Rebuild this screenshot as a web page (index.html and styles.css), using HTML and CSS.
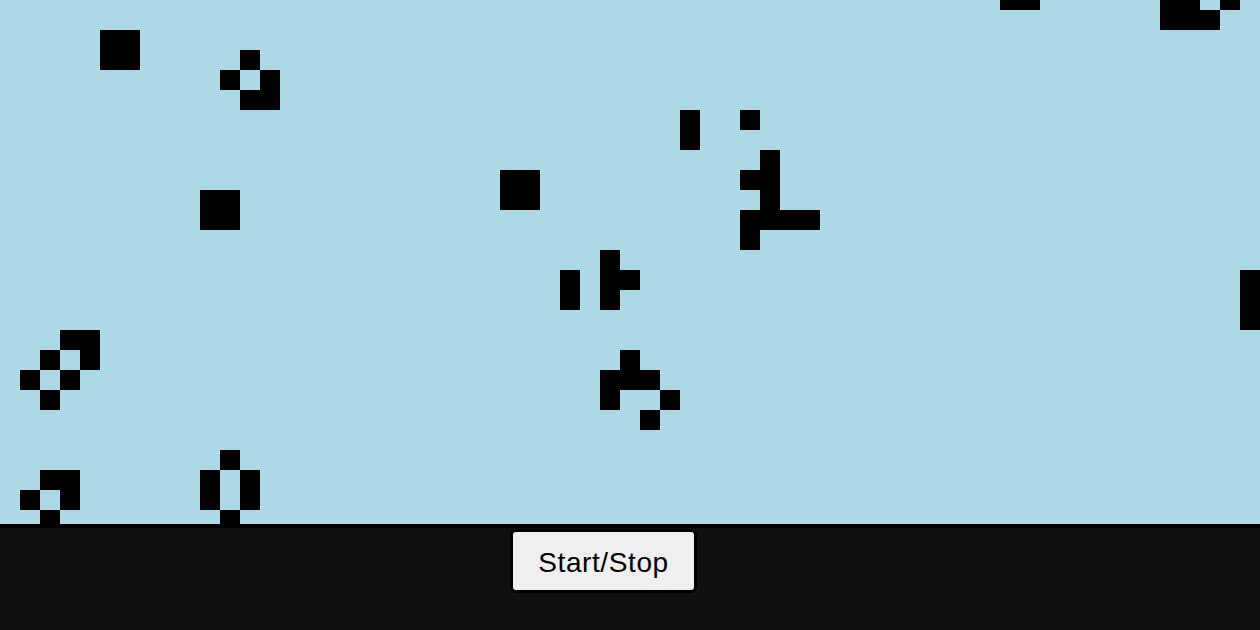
FILE: index.html
```html
<!DOCTYPE html>
<html>
<head>
<meta charset="utf-8">
<title>Game of Life</title>
<link rel="stylesheet" href="styles.css">
</head>
<body>
<div class="board">
  <div class="grid">
    <div class="cell" style="grid-area: 3 / 6"></div>
    <div class="cell" style="grid-area: 3 / 7"></div>
    <div class="cell" style="grid-area: 4 / 6"></div>
    <div class="cell" style="grid-area: 4 / 7"></div>

    <div class="cell" style="grid-area: 4 / 13"></div>
    <div class="cell" style="grid-area: 5 / 12"></div>
    <div class="cell" style="grid-area: 5 / 14"></div>
    <div class="cell" style="grid-area: 6 / 13"></div>
    <div class="cell" style="grid-area: 6 / 14"></div>

    <div class="cell" style="grid-area: 11 / 11"></div>
    <div class="cell" style="grid-area: 11 / 12"></div>
    <div class="cell" style="grid-area: 12 / 11"></div>
    <div class="cell" style="grid-area: 12 / 12"></div>

    <div class="cell" style="grid-area: 7 / 35"></div>
    <div class="cell" style="grid-area: 8 / 35"></div>
    <div class="cell" style="grid-area: 7 / 38"></div>
    <div class="cell" style="grid-area: 9 / 39"></div>
    <div class="cell" style="grid-area: 10 / 39"></div>
    <div class="cell" style="grid-area: 11 / 39"></div>
    <div class="cell" style="grid-area: 10 / 38"></div>
    <div class="cell" style="grid-area: 12 / 38"></div>
    <div class="cell" style="grid-area: 12 / 39"></div>
    <div class="cell" style="grid-area: 12 / 40"></div>
    <div class="cell" style="grid-area: 12 / 41"></div>
    <div class="cell" style="grid-area: 13 / 38"></div>

    <div class="cell" style="grid-area: 10 / 26"></div>
    <div class="cell" style="grid-area: 10 / 27"></div>
    <div class="cell" style="grid-area: 11 / 26"></div>
    <div class="cell" style="grid-area: 11 / 27"></div>

    <div class="cell" style="grid-area: 15 / 29"></div>
    <div class="cell" style="grid-area: 16 / 29"></div>
    <div class="cell" style="grid-area: 14 / 31"></div>
    <div class="cell" style="grid-area: 15 / 31"></div>
    <div class="cell" style="grid-area: 16 / 31"></div>
    <div class="cell" style="grid-area: 15 / 32"></div>

    <div class="cell" style="grid-area: 19 / 32"></div>
    <div class="cell" style="grid-area: 20 / 31"></div>
    <div class="cell" style="grid-area: 20 / 32"></div>
    <div class="cell" style="grid-area: 20 / 33"></div>
    <div class="cell" style="grid-area: 21 / 31"></div>
    <div class="cell" style="grid-area: 21 / 34"></div>
    <div class="cell" style="grid-area: 22 / 33"></div>

    <div class="cell" style="grid-area: 18 / 4"></div>
    <div class="cell" style="grid-area: 18 / 5"></div>
    <div class="cell" style="grid-area: 19 / 3"></div>
    <div class="cell" style="grid-area: 19 / 5"></div>
    <div class="cell" style="grid-area: 20 / 2"></div>
    <div class="cell" style="grid-area: 20 / 4"></div>
    <div class="cell" style="grid-area: 21 / 3"></div>

    <div class="cell" style="grid-area: 25 / 3"></div>
    <div class="cell" style="grid-area: 25 / 4"></div>
    <div class="cell" style="grid-area: 26 / 2"></div>
    <div class="cell" style="grid-area: 26 / 4"></div>
    <div class="cell" style="grid-area: 27 / 3"></div>

    <div class="cell" style="grid-area: 24 / 12"></div>
    <div class="cell" style="grid-area: 25 / 11"></div>
    <div class="cell" style="grid-area: 26 / 11"></div>
    <div class="cell" style="grid-area: 25 / 13"></div>
    <div class="cell" style="grid-area: 26 / 13"></div>
    <div class="cell" style="grid-area: 27 / 12"></div>

    <div class="cell" style="grid-area: 1 / 51"></div>
    <div class="cell" style="grid-area: 1 / 52"></div>
    <div class="cell" style="grid-area: 1 / 59"></div>
    <div class="cell" style="grid-area: 1 / 60"></div>
    <div class="cell" style="grid-area: 2 / 59"></div>
    <div class="cell" style="grid-area: 2 / 60"></div>
    <div class="cell" style="grid-area: 2 / 61"></div>
    <div class="cell" style="grid-area: 1 / 62"></div>

    <div class="cell" style="grid-area: 15 / 63"></div>
    <div class="cell" style="grid-area: 16 / 63"></div>
    <div class="cell" style="grid-area: 17 / 63"></div>
  </div>
</div>
<div class="controls">
  <button class="toggle" type="button">Start/Stop</button>
</div>
</body>
</html>
```

FILE: styles.css
```css
html, body {
  margin: 0;
  padding: 0;
}

body {
  background: #111111;
  font-family: "Liberation Sans", Arial, sans-serif;
  overflow: hidden;
}

.board {
  height: 524px;
  overflow: hidden;
  background: #add8e6;
  border-bottom: 4px solid #000000;
}

.grid {
  display: grid;
  grid-template-columns: repeat(63, 20px);
  grid-template-rows: repeat(28, 20px);
  margin-top: -10px;
}

.cell {
  background: #000000;
}

.controls {
  display: flex;
  padding: 1px 0 0 510px;
}

.toggle {
  box-sizing: border-box;
  width: 187px;
  height: 64px;
  padding: 3px 0 0;
  border: 3px solid #000000;
  border-radius: 6px;
  background: #efefef;
  color: #000000;
  font-family: "Liberation Sans", Arial, sans-serif;
  font-size: 28px;
  letter-spacing: 0.6px;
  line-height: 1;
}
```
